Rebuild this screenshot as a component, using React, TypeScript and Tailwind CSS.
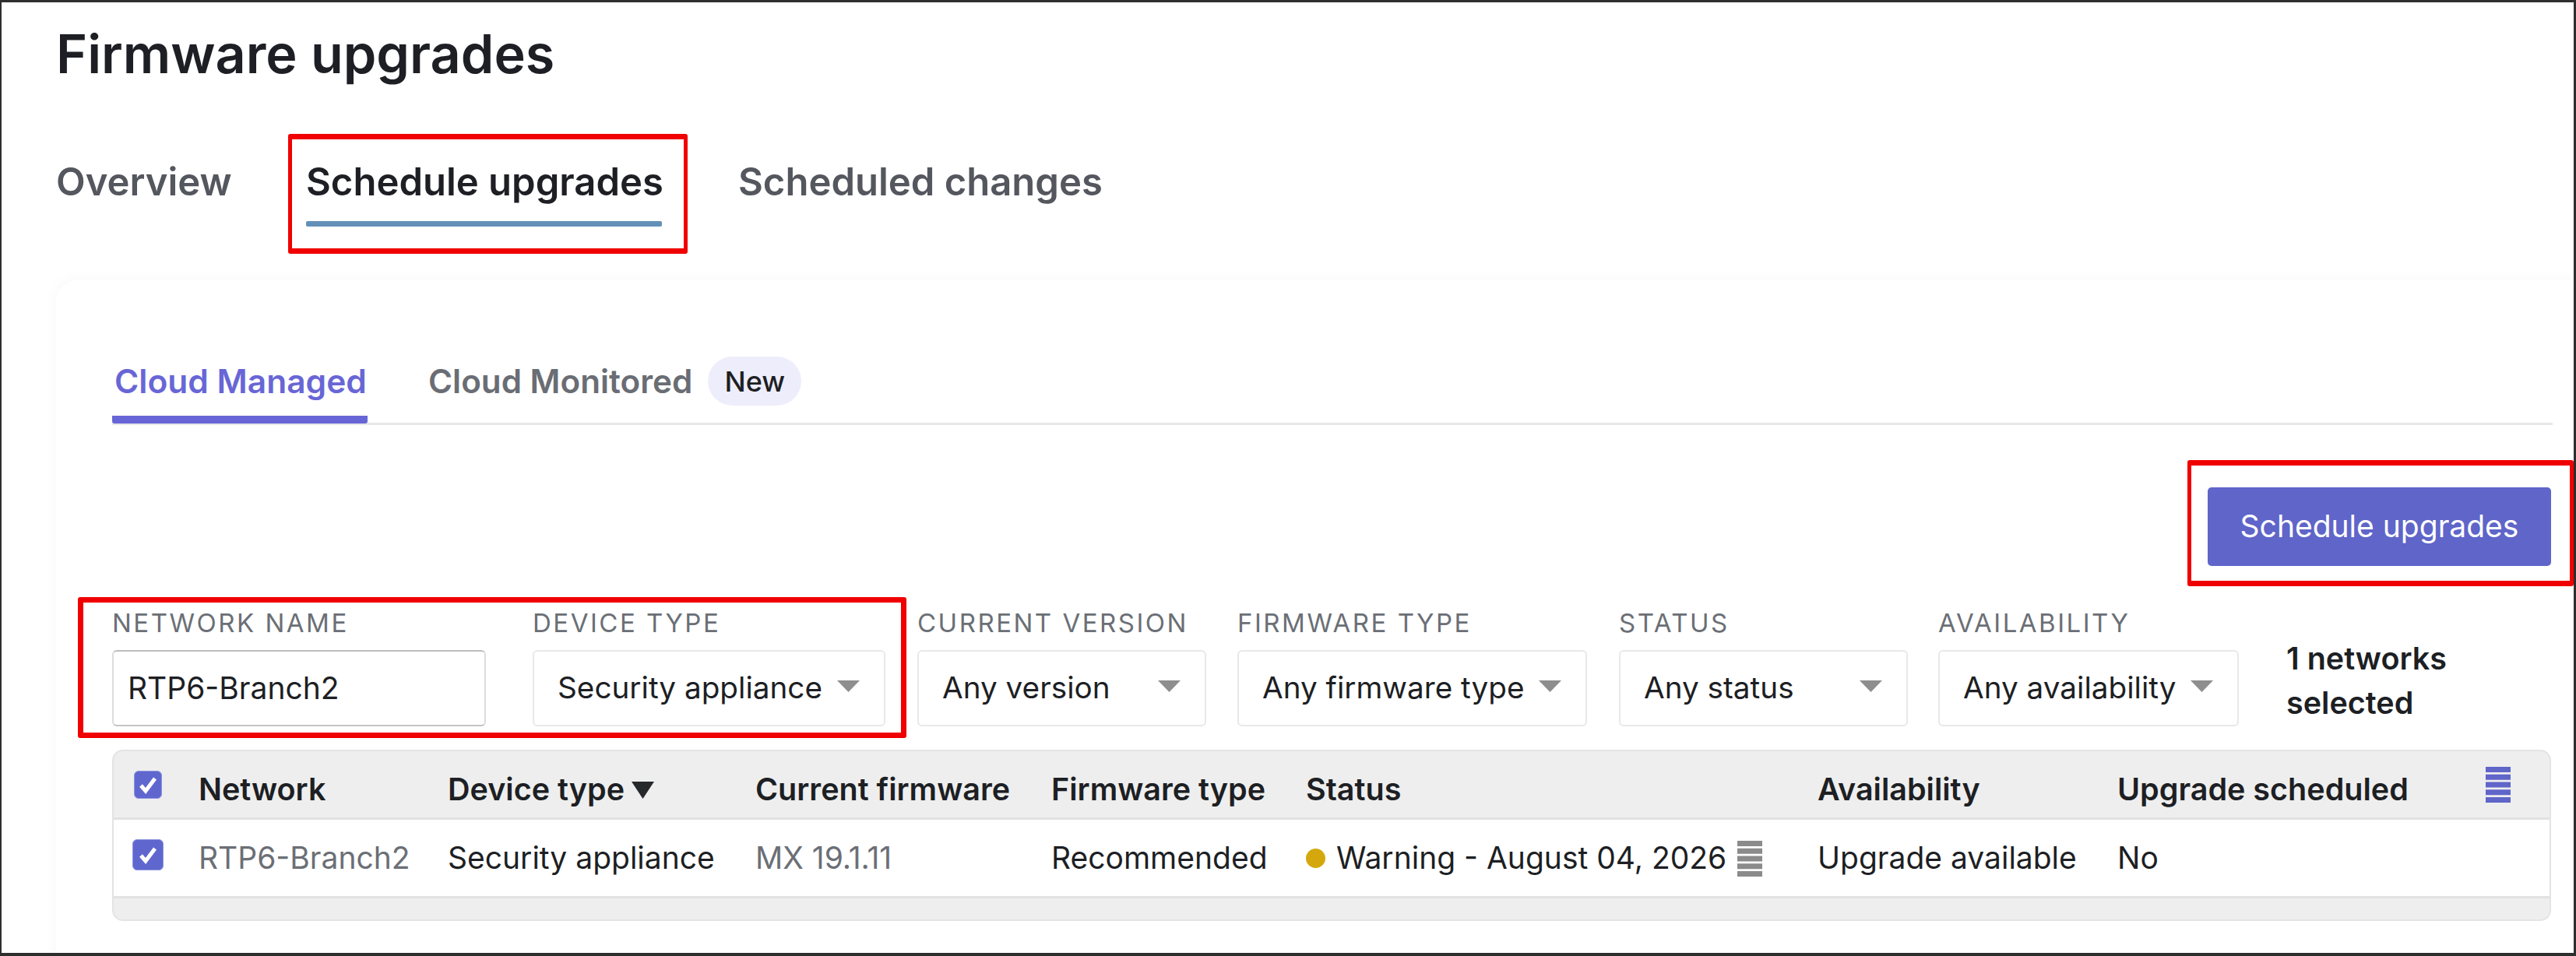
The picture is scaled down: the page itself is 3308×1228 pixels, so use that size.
import React from 'react';

const filters = [
  { label: 'DEVICE TYPE', value: 'Security appliance', w: 'w-[453px]', ml: 'ml-[60px]' },
  { label: 'CURRENT VERSION', value: 'Any version', w: 'w-[371px]', ml: 'ml-[41px]' },
  { label: 'FIRMWARE TYPE', value: 'Any firmware type', w: 'w-[449px]', ml: 'ml-[40px]' },
  { label: 'STATUS', value: 'Any status', w: 'w-[371px]', ml: 'ml-[41px]' },
  { label: 'AVAILABILITY', value: 'Any availability', w: 'w-[386px]', ml: 'ml-[39px]' },
];

function Caret({ color = '#8e8e8e', w = 29, h = 15, className = '' }: { color?: string; w?: number; h?: number; className?: string }) {
  return (
    <svg width={w} height={h} viewBox="0 0 29 15" preserveAspectRatio="none" className={`shrink-0 ${className}`}>
      <path d="M0 0h29L14.5 15z" fill={color} />
    </svg>
  );
}

function Stripes({ color }: { color: string }) {
  return (
    <svg width="32" height="46" viewBox="0 0 32 46" className="shrink-0">
      {[0, 9.75, 19.5, 29.25, 39].map(y => (
        <rect key={y} x="0" y={y} width="32" height="7" fill={color} />
      ))}
    </svg>
  );
}

function Check({ size }: { size: number }) {
  return (
    <div
      className="flex items-center justify-center rounded-[6px] bg-[#5f67cf] border border-[#8f94de] shrink-0"
      style={{ width: size, height: size }}
    >
      <svg width="26" height="26" viewBox="0 0 26 26" fill="none">
        <path d="M4 14l6 7L22 5" stroke="#fff" strokeWidth="5" />
      </svg>
    </div>
  );
}

export default function App() {
  return (
    <div className="relative w-[3308px] h-[1228px] overflow-hidden bg-white border-t-[3px] border-l-[2px] border-r-[3px] border-b-[4px] border-[#2e2e2e] font-['Inter',sans-serif] text-[#1d1f24]">
      <div className="pl-[70px]">
        <h1 className="h-[80px] mt-[26px] text-[68.3px] leading-[80px] font-semibold whitespace-nowrap">Firmware upgrades</h1>

        {/* Page tabs */}
        <div className="flex mt-[85px] text-[49px] leading-[80px] font-semibold text-[#54575e]">
          <div className="w-[321px]">Overview</div>
          <div className="w-[555px] text-[#1d1f24]">
            <div className="w-[457px] whitespace-nowrap">Schedule upgrades</div>
            <div className="w-[457px] h-[7px] mt-[10px] rounded-[2px] bg-[#6390b8]" />
          </div>
          <div>Scheduled changes</div>
        </div>

        {/* Card */}
        <div className="mt-[69px] h-[900px] pl-[72px] pt-[98px] pr-[27px] rounded-tl-[28px] bg-white shadow-[0_0_16px_4px_rgba(0,0,0,0.025)]">
          <div className="flex h-[88px] border-b-[3px] border-[#e8e8e8]">
            <div className="w-[328px] h-[86px] pl-[3px] pt-[2px] border-b-[10px] border-[#6866d6] rounded-b-[3px] text-[42.5px] leading-[60px] font-semibold text-[#6866d6] whitespace-nowrap">Cloud Managed</div>
            <div className="ml-[78px] pt-[2px] text-[42.2px] leading-[60px] font-semibold text-[#6a6d74]">Cloud Monitored</div>
            <div className="ml-[20px] flex items-center justify-center w-[120px] h-[63px] rounded-full bg-[#eeedfb] text-[36px] font-medium text-[#1d1f24]">New</div>
          </div>

          <div className="flex justify-end mt-[80px] mr-[2px]">
            <button className="w-[441px] h-[101px] rounded-[5px] bg-[#5f65c9] text-[39px] text-white">Schedule upgrades</button>
          </div>

          {/* Filters */}
          <div className="flex mt-[49px]">
            <div className="w-[480px]">
              <div className="h-[48px] mb-[11px] text-[33px] leading-[48px] tracking-[2.5px] text-[#6b6f76] whitespace-nowrap">NETWORK NAME</div>
              <div className="flex items-center h-[98px] pl-[18px] rounded-[6px] border-2 border-[#dcdcdc] border-t-[#bdbdbd] border-b-[#c4c4c4] text-[39px]">RTP6-Branch2</div>
            </div>
            {filters.map(f => (
              <div key={f.label} className={`${f.w} ${f.ml}`}>
                <div className="h-[48px] mb-[11px] text-[33px] leading-[48px] tracking-[2.5px] text-[#6b6f76] whitespace-nowrap">{f.label}</div>
                <div className="flex items-center justify-between h-[98px] pl-[30px] pr-[31px] rounded-[6px] border-2 border-[#e8e8e8] text-[38.7px] whitespace-nowrap">
                  <span className="mb-[2px]">{f.value}</span>
                  <Caret className="mb-[6px]" />
                </div>
              </div>
            ))}
            <div className="ml-[61px] mt-[42px] text-[39.5px] leading-[57px] font-semibold whitespace-nowrap">1 networks<br />selected</div>
          </div>

          {/* Table */}
          <div className="mt-[30px] w-[3132px] rounded-[14px] border-2 border-[#e4e4e4] bg-[#eeeeee] overflow-hidden">
            <div className="flex items-center h-[88px] border-b-[3px] border-[#e2e2e2] text-[39.5px] font-semibold whitespace-nowrap">
              <div className="w-[111px] pl-[26px]"><Check size={36} /></div>
              <div className="w-[318px] -ml-[2px] mr-[2px] pt-[14px]">Network</div>
              <div className="flex items-center gap-[9px] w-[395px] pt-[14px]">Device type <Caret color="#26282c" w={29} h={22} /></div>
              <div className="w-[380px] pt-[14px]">Current firmware</div>
              <div className="w-[327px] pt-[14px]">Firmware type</div>
              <div className="w-[657px] pt-[14px]">Status</div>
              <div className="w-[385px] pt-[14px]">Availability</div>
              <div className="w-[473px] pt-[14px]">Upgrade scheduled</div>
              <Stripes color="#5f65c9" />
            </div>
            <div className="flex items-center h-[101px] pt-[1px] bg-white border-b-[3px] border-[#e2e2e2] text-[39px] whitespace-nowrap">
              <div className="w-[111px] pl-[24px] mb-[9px]"><Check size={40} /></div>
              <div className="w-[318px] -ml-[2px] mr-[2px] text-[#6b6f76]">RTP6-Branch2</div>
              <div className="w-[395px]">Security appliance</div>
              <div className="w-[380px] text-[#6b6f76]">MX 19.1.11</div>
              <div className="w-[327px]">Recommended</div>
              <div className="flex items-center w-[657px]">
                <span className="w-[25px] h-[25px] rounded-full bg-[#d4a80c] mr-[14px]" />
                <span className="mr-[14px]">Warning - August 04, 2026</span>
                <Stripes color="#8b8b8b" />
              </div>
              <div className="w-[385px]">Upgrade available</div>
              <div>No</div>
            </div>
            <div className="h-[27px]" />
          </div>
        </div>
      </div>

      {/* Red annotation boxes */}
      <div className="absolute left-[368px] top-[169px] w-[513px] h-[154px] rounded-[3px] border-[7px] border-l-[5px] border-r-[5px] border-[#f00000]" />
      <div className="absolute left-[2807px] top-[588px] w-[496px] h-[162px] rounded-[3px] border-[7px] border-l-[5px] border-r-[5px] border-[#f00000]" />
      <div className="absolute left-[98px] top-[764px] w-[1064px] h-[181px] rounded-[3px] border-[7px] border-[#f00000]" />
    </div>
  );
}
